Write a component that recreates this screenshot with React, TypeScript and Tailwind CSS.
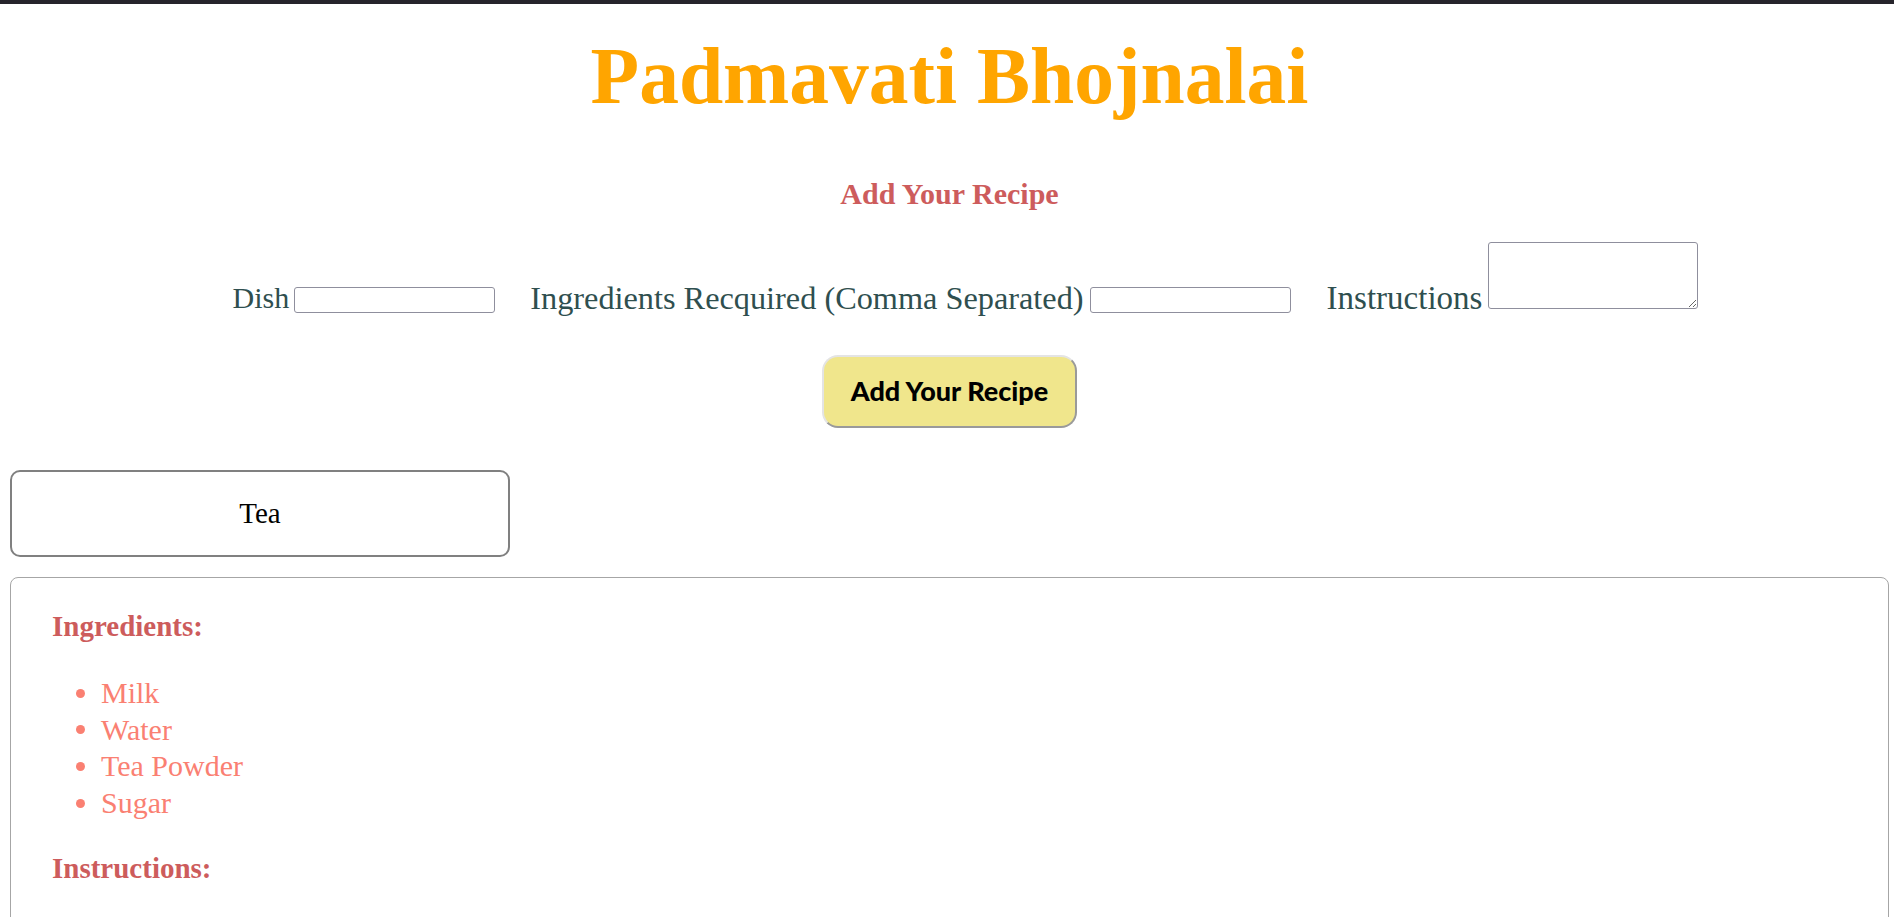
import React from "react";

const serif = "font-['Liberation_Serif','Times_New_Roman',serif]";

export default function App() {
  const ingredients = ["Milk", "Water", "Tea Powder", "Sugar"];
  return (
    <div className={`min-h-screen bg-white ${serif}`}>
      <div className="h-[4px] bg-[#26242b]" />
      <div className="pl-[10px] pr-[5px]">
        <h1 className="mt-[32px] h-[80px] text-center text-[79.5px] font-bold leading-[80px] text-[#FFA500]">
          Padmavati Bhojnalai
        </h1>
        <h2 className="mt-[58px] h-[40px] text-center text-[30px] font-bold leading-[40px] text-[#CD5C5C]">
          Add Your Recipe
        </h2>
        <div className="mt-[28px] flex items-end justify-center pl-[32px] text-[32px] leading-[30px] text-[#2F4F4F]">
          <label className="mr-[5px] text-[30px]">Dish</label>
          <input
            type="text"
            className="h-[26px] w-[201px] rounded-[3px] border border-[#8f8f9d] bg-white"
          />
          <label className="ml-[35px] mr-[6px] text-[32.3px]">Ingredients Recquired (Comma Separated)</label>
          <input
            type="text"
            className="h-[26px] w-[201px] rounded-[3px] border border-[#8f8f9d] bg-white"
          />
          <label className="ml-[36px] mr-[6px] text-[33px]">Instructions</label>
          <textarea className="mb-[4px] block h-[67px] w-[210px] rounded-[3px] border border-[#8f8f9d] bg-white" />
        </div>
        <div className="mt-[42px] flex justify-center">
          <button className="h-[73px] w-[255px] rounded-[16px] border-2 border-t-[#e4e4e4] border-l-[#e4e4e4] border-r-[#9a9a9a] border-b-[#9a9a9a] bg-[#F0E68C] font-['Lato',sans-serif] text-[27px] font-black text-black">
            Add Your Recipe
          </button>
        </div>
        <div className="mt-[42px] flex h-[87px] w-[500px] items-center justify-center rounded-[10px] border-2 border-[#808080] text-[29px] text-black">
          Tea
        </div>
        <div className="mt-[20px] rounded-[8px] border border-[#a6a6a6] pb-[80px] pl-[41px] pt-[30px]">
          <h3 className="h-[36px] text-[29px] font-bold leading-[36px] text-[#CD5C5C]">Ingredients:</h3>
          <ul className="mt-[31px]">
            {ingredients.map((item) => (
              <li
                key={item}
                className="flex h-[36.67px] items-center text-[30px] leading-[36.67px] text-[#FA8072]"
              >
                <span className="ml-[24px] mr-[16px] h-[9px] w-[9px] rounded-full bg-[#FA8072]" />
                <span>{item}</span>
              </li>
            ))}
          </ul>
          <h3 className="mt-[28px] h-[36px] text-[29px] font-bold leading-[36px] text-[#CD5C5C]">Instructions:</h3>
        </div>
      </div>
    </div>
  );
}
